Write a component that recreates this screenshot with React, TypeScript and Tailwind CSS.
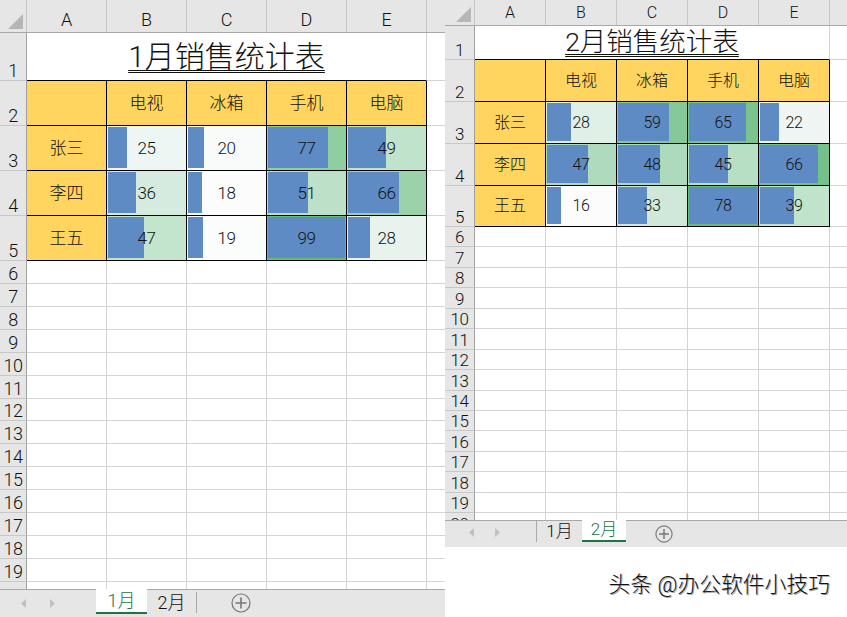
import React from "react";

const FONT = "[font-family:'Roboto','Noto_Sans_CJK_SC',sans-serif] font-light";

type Cell = { v: number; bg: string };

type Cfg = {
  title: string;
  columnClass: string;
  tailClass: string;
  rowHeadClass: string;
  headerClass: string;
  headTextClass: string;
  rowNumClass: string;
  titleRowClass: string;
  titleClass: string;
  mergeClass: string;
  headRowClass: string;
  dataRowHeights: string[];
  plainRowClass: string;
  plainRows: number;
  hideLastLabel: boolean;
  cellTextClass: string;
  labelTextClass: string;
  barScale: number;
  rows: { name: string; cells: Cell[] }[];
};

const products = ["电视", "冰箱", "手机", "电脑"];

const jan: Cfg = {
  title: "1月销售统计表",
  columnClass: "w-[80px]",
  tailClass: "w-[18px]",
  rowHeadClass: "w-[27px]",
  headerClass: "h-[33px]",
  headTextClass: "text-[18px] pt-[6px]",
  rowNumClass: "text-[18px] leading-[18px] tracking-[-0.5px]",
  titleRowClass: "h-[48px]",
  titleClass: "text-[30px] leading-[40px] pt-[4px]",
  mergeClass: "w-[400px]",
  headRowClass: "h-[45px]",
  dataRowHeights: ["h-[45px]", "h-[45px]", "h-[45px]"],
  plainRowClass: "h-[22.93px]",
  plainRows: 15,
  hideLastLabel: true,
  cellTextClass: "text-[17px] tracking-[-0.4px] pt-[1px]",
  labelTextClass: "text-[17px] pt-[1px]",
  barScale: 0.775,
  rows: [
    {
      name: "张三",
      cells: [
        { v: 25, bg: "#edf6f3" },
        { v: 20, bg: "#f9fbfb" },
        { v: 77, bg: "#8fcea1" },
        { v: 49, bg: "#c0e3cb" },
      ],
    },
    {
      name: "李四",
      cells: [
        { v: 36, bg: "#d6ebdf" },
        { v: 18, bg: "#fcfcfd" },
        { v: 51, bg: "#bce1c8" },
        { v: 66, bg: "#9bd2aa" },
      ],
    },
    {
      name: "王五",
      cells: [
        { v: 47, bg: "#c3e4cd" },
        { v: 19, bg: "#fbfcfc" },
        { v: 99, bg: "#63be7b" },
        { v: 28, bg: "#e8f3ee" },
      ],
    },
  ],
};

const feb: Cfg = {
  title: "2月销售统计表",
  columnClass: "w-[71px]",
  tailClass: "w-[17px]",
  rowHeadClass: "w-[30px]",
  headerClass: "h-[26px]",
  headTextClass: "text-[16px] pt-[1px]",
  rowNumClass: "text-[17px] leading-[15px] tracking-[-0.5px] pb-[1px]",
  titleRowClass: "h-[34px]",
  titleClass: "text-[26.5px] leading-[32px]",
  mergeClass: "w-[355px]",
  headRowClass: "h-[42px]",
  dataRowHeights: ["h-[42px]", "h-[42px]", "h-[41px]"],
  plainRowClass: "h-[20.45px]",
  plainRows: 15,
  hideLastLabel: false,
  cellTextClass: "text-[16px] tracking-[-0.4px]",
  labelTextClass: "text-[16px]",
  barScale: 68 / 78,
  rows: [
    {
      name: "张三",
      cells: [
        { v: 28, bg: "#dff0e7" },
        { v: 59, bg: "#85c99a" },
        { v: 65, bg: "#7bc48f" },
        { v: 22, bg: "#eef5f2" },
      ],
    },
    {
      name: "李四",
      cells: [
        { v: 47, bg: "#afdabd" },
        { v: 48, bg: "#addabc" },
        { v: 45, bg: "#b7dfc4" },
        { v: 66, bg: "#74c28a" },
      ],
    },
    {
      name: "王五",
      cells: [
        { v: 16, bg: "#fcfcfd" },
        { v: 33, bg: "#cfe8d9" },
        { v: 78, bg: "#63be7b" },
        { v: 39, bg: "#c0e3cb" },
      ],
    },
  ],
};

function RowHead({ cfg, n, h, hide }: { cfg: Cfg; n: number; h: string; hide?: boolean }) {
  return (
    <div
      className={`${cfg.rowHeadClass} ${h} ${cfg.rowNumClass} shrink-0 flex items-end justify-center bg-[#e6e6e6] border-r border-b border-r-[#a0a0a0] border-b-[#c8c8c8] text-[#111]`}
    >
      {hide ? "" : n}
    </div>
  );
}

function Sheet({ cfg }: { cfg: Cfg }) {
  const cols = ["A", "B", "C", "D", "E"];
  return (
    <div className="flex flex-col flex-1 min-h-0 overflow-hidden">
      <div className={`${cfg.headerClass} flex shrink-0 bg-[#e6e6e6] border-b border-[#a8a8a8]`}>
        <div className={`${cfg.rowHeadClass} shrink-0 flex items-end justify-end pr-[3px] pb-[3px] border-r border-[#c8c8c8]`}>
          <svg width="15" height="15" viewBox="0 0 15 15">
            <polygon points="15,0 15,15 0,15" fill="#b6b6b6" />
          </svg>
        </div>
        {cols.map((c) => (
          <div
            key={c}
            className={`${cfg.columnClass} ${cfg.headTextClass} shrink-0 text-center border-r border-[#c8c8c8] text-[#111]`}
          >
            {c}
          </div>
        ))}
      </div>
      <div className="flex-1 min-h-0 overflow-hidden bg-white">
        <div className={`flex ${cfg.titleRowClass}`}>
          <RowHead cfg={cfg} n={1} h="h-full" />
          <div className={`${cfg.mergeClass} shrink-0 h-full border-r border-b border-r-[#d4d4d4] border-b-black flex justify-center`}>
            <span className={`${cfg.titleClass} text-[#111] underline decoration-double decoration-1 underline-offset-[3px]`}>
              {cfg.title}
            </span>
          </div>
          <div className={`${cfg.tailClass} shrink-0 border-b border-[#d4d4d4]`} />
        </div>
        <div className={`flex ${cfg.headRowClass}`}>
          <RowHead cfg={cfg} n={2} h="h-full" />
          <div className={`${cfg.columnClass} shrink-0 bg-[#ffd45f] border-r border-b border-black`} />
          {products.map((p) => (
            <div
              key={p}
              className={`${cfg.columnClass} ${cfg.labelTextClass} shrink-0 flex items-center justify-center bg-[#ffd45f] border-r border-b border-black text-[#111]`}
            >
              {p}
            </div>
          ))}
          <div className={`${cfg.tailClass} shrink-0 border-b border-[#d4d4d4]`} />
        </div>
        {cfg.rows.map((r, i) => (
          <div key={r.name} className={`flex ${cfg.dataRowHeights[i]}`}>
            <RowHead cfg={cfg} n={i + 3} h="h-full" />
            <div className={`${cfg.columnClass} ${cfg.labelTextClass} shrink-0 flex items-center justify-center bg-[#ffd45f] border-r border-b border-black text-[#111]`}>
              {r.name}
            </div>
            {r.cells.map((c) => (
              <div
                key={c.v}
                className={`${cfg.columnClass} ${cfg.cellTextClass} relative shrink-0 flex items-center justify-center border-r border-b border-black text-[#111]`}
                style={{ backgroundColor: c.bg }}
              >
                <div
                  className="absolute left-[1px] top-[1px] bottom-[2px] bg-[#5f8bc4]"
                  style={{ width: Math.round(c.v * cfg.barScale) }}
                />
                <span className="relative">{c.v}</span>
              </div>
            ))}
            <div className={`${cfg.tailClass} shrink-0 border-b border-[#d4d4d4]`} />
          </div>
        ))}
        {Array.from({ length: cfg.plainRows }, (_, i) => (
          <div key={i} className={`flex ${cfg.plainRowClass}`}>
            <RowHead cfg={cfg} n={i + 6} h="h-full" hide={cfg.hideLastLabel && i === cfg.plainRows - 1} />
            {cols.map((c) => (
              <div key={c} className={`${cfg.columnClass} shrink-0 border-r border-b border-[#d4d4d4]`} />
            ))}
            <div className={`${cfg.tailClass} shrink-0 border-b border-[#d4d4d4]`} />
          </div>
        ))}
      </div>
    </div>
  );
}

function Arrows({ cls }: { cls: string }) {
  return (
    <div className={`${cls} flex items-center shrink-0`}>
      <svg width="6" height="9" viewBox="0 0 6 9">
        <polygon points="5,0 5,9 0,4.5" fill="#c0c0c0" />
      </svg>
      <svg width="6" height="9" viewBox="0 0 6 9">
        <polygon points="1,0 1,9 6,4.5" fill="#c0c0c0" />
      </svg>
    </div>
  );
}

function PlusCircle({ size }: { size: number }) {
  return (
    <svg width={size} height={size} viewBox="0 0 20 20" className="shrink-0">
      <circle cx="10" cy="10" r="9" fill="none" stroke="#777" strokeWidth="1.2" />
      <path d="M10 4.5v11M4.5 10h11" stroke="#777" strokeWidth="1.6" />
    </svg>
  );
}

export default function App() {
  return (
    <div className={`flex w-[847px] h-[617px] bg-white overflow-hidden ${FONT}`}>
      <div className="w-[445px] h-full flex flex-col shrink-0">
        <Sheet cfg={jan} />
        <div className="h-[28px] shrink-0 flex bg-[#e6e6e6] border-t border-[#a8a8a8]">
          <Arrows cls="pl-[21px] gap-[22px] w-[96px] -mt-[1px]" />
          <div className="w-[51px] h-[25px] -mt-[1px] shrink-0 flex items-center justify-center bg-white border-b-2 border-[#217346] text-[#217346] text-[18px]">
            1月
          </div>
          <div className="w-[50px] h-[21px] shrink-0 flex items-center justify-center text-[#111] text-[18px] border-r border-[#aaa] mt-[2px]">
            2月
          </div>
          <div className="ml-[34px] mt-[3px]">
            <PlusCircle size={20} />
          </div>
        </div>
      </div>
      <div className="w-[402px] h-full flex flex-col shrink-0">
        <div className="h-[520px] flex flex-col shrink-0">
          <Sheet cfg={feb} />
        </div>
        <div className="h-[27px] shrink-0 flex bg-[#e6e6e6] border-t border-[#a8a8a8]">
          <Arrows cls="pl-[24px] gap-[19px] w-[91px] -mt-[3px]" />
          <div className="w-[46px] h-[21px] shrink-0 flex items-center justify-center text-[#111] text-[17px] border-l border-[#aaa]">
            1月
          </div>
          <div className="w-[44px] h-[22px] -mt-[1px] shrink-0 flex items-center justify-center bg-white border-b-2 border-[#217346] text-[#217346] text-[17px]">
            2月
          </div>
          <div className="ml-[29px] mt-[4px]">
            <PlusCircle size={18} />
          </div>
        </div>
        <div className="flex-1 flex justify-end pr-[17px] pt-[22px]">
          <span className="text-[21.8px] leading-[32px] text-[#111] [text-shadow:1px_1px_0_#aaa] whitespace-pre">
            头条 @办公软件小技巧
          </span>
        </div>
      </div>
    </div>
  );
}
